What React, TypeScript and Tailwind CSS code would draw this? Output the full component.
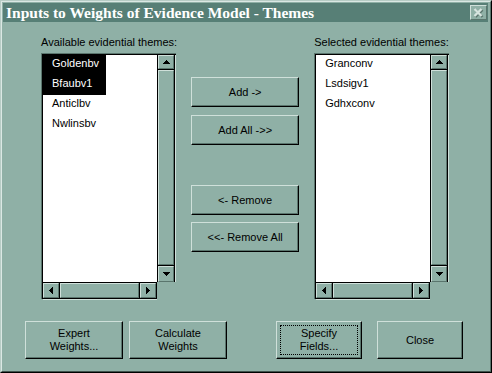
import React from "react";

const raised =
  "border border-t-[#cfe0da] border-l-[#cfe0da] border-r-[#5a756d] border-b-[#5a756d] bg-[#8fb0a6]";

function Arrow({ dir }: { dir: "up" | "down" | "left" | "right" }) {
  const vertical = dir === "up" || dir === "down";
  const w = vertical ? 7 : 4;
  const h = vertical ? 4 : 7;
  const pts = {
    up: "0,4 7,4 3.5,0",
    down: "0,0 7,0 3.5,4",
    left: "4,0 4,7 0,3.5",
    right: "0,0 0,7 4,3.5",
  }[dir];
  return (
    <svg width={w} height={h} viewBox={`0 0 ${w} ${h}`} shapeRendering="crispEdges">
      <polygon points={pts} fill="#000" />
    </svg>
  );
}

function ListBox({ items, selected = [] }: { items: string[]; selected?: number[] }) {
  return (
    <div className="w-[135px] border-t border-l border-[#5a756d]">
      <div className="grid grid-cols-[114px_18px] grid-rows-[227px_17px] border-t border-l border-black">
        {/* items */}
        <div className="bg-white">
          {items.map((it, i) => (
            <div key={it} className="h-[20px] flex">
              <div
                className={
                  selected.includes(i)
                    ? "w-[63px] h-full bg-black text-white pl-[9px] pb-[3px] flex items-center"
                    : "h-full pl-[9px] pb-[3px] flex items-center text-black"
                }
              >
                {it}
              </div>
            </div>
          ))}
        </div>
        {/* vertical scrollbar */}
        <div className="flex flex-col border-l border-r border-black shadow-[1px_0_0_#cfe0da]">
          <div className="h-[15px] border-b border-black">
            <div className={`${raised} h-full flex items-center justify-center`}>
              <Arrow dir="up" />
            </div>
          </div>
          <div className={`${raised} flex-1`} />
          <div className="h-[17px] border-t border-black">
            <div className={`${raised} h-full flex items-center justify-center`}>
              <Arrow dir="down" />
            </div>
          </div>
        </div>
        {/* horizontal scrollbar */}
        <div className="flex border-t border-b border-r border-black shadow-[0_1px_0_#cfe0da]">
          <div className="w-[17px] border-r border-black">
            <div className={`${raised} h-full flex items-center justify-center`}>
              <Arrow dir="left" />
            </div>
          </div>
          <div className={`${raised} flex-1`} />
          <div className="w-[17px] border-l border-black">
            <div className={`${raised} h-full flex items-center justify-center`}>
              <Arrow dir="right" />
            </div>
          </div>
        </div>
        <div />
      </div>
    </div>
  );
}

function Button({
  children,
  className = "",
  focused = false,
}: {
  children: React.ReactNode;
  className?: string;
  focused?: boolean;
}) {
  return (
    <div
      className={`border border-t-[#cfe0da] border-l-[#cfe0da] border-r-black border-b-black shadow-[inset_-1px_-1px_0_#5a756d] bg-[#8fb0a6] p-[3px] ${className}`}
    >
      <div
        className={`h-full flex items-center justify-center text-center leading-[13px] ${
          focused ? "border border-dotted border-black" : "border border-transparent"
        }`}
      >
        {children}
      </div>
    </div>
  );
}

export default function App() {
  return (
    <div className="w-[492px] h-[373px] bg-[#8fb0a6] font-['Liberation_Sans',Arial,sans-serif] text-[11px] text-black overflow-hidden">
      <div className="w-full h-full border border-t-[#b7ccc5] border-l-[#b7ccc5] border-r-black border-b-black">
        <div className="w-full h-full border border-t-[#dbe8e4] border-l-[#dbe8e4] border-r-[#5a756d] border-b-[#3f524c] pt-px pl-px pr-[2px] flex flex-col">
          {/* Title bar */}
          <div className="h-[19px] bg-[#577f76] flex items-center justify-between pl-[3px] pr-px">
            <span className="font-['Liberation_Serif',serif] font-bold text-[15.5px] text-white leading-none pt-px">
              Inputs to Weights of Evidence Model - Themes
            </span>
            <div className={`${raised} w-[17px] h-[15px] flex items-center justify-center`}>
              <svg width="11" height="10" viewBox="0 0 11 10">
                <path d="M2.5 2 L9.5 9 M9.5 2 L2.5 9" stroke="#5a756d" strokeWidth="2.4" />
                <path d="M1.5 1 L8.5 8 M8.5 1 L1.5 8" stroke="#d6e4df" strokeWidth="2.4" />
              </svg>
            </div>
          </div>

          {/* Main area */}
          <div className="flex pl-[38px] pt-[13px]">
            <div className="flex flex-col">
              <div className="h-[14px] leading-[14px] mb-[4px]">Available evidential themes:</div>
              <ListBox items={["Goldenbv", "Bfaubv1", "Anticlbv", "Nwlinsbv"]} selected={[0, 1]} />
            </div>

            <div className="ml-[14px] w-[108px] pt-[42px] flex flex-col">
              <Button className="h-[30px]">Add -&gt;</Button>
              <Button className="h-[30px] mt-[8px]">Add All -&gt;&gt;</Button>
              <Button className="h-[30px] mt-[40px]">&lt;- Remove</Button>
              <Button className="h-[30px] mt-[7px]">&lt;&lt;- Remove All</Button>
            </div>

            <div className="ml-[15px] flex flex-col">
              <div className="h-[14px] leading-[14px] mb-[4px]">Selected evidential themes:</div>
              <ListBox items={["Granconv", "Lsdsigv1", "Gdhxconv"]} />
            </div>
          </div>

          {/* Bottom buttons */}
          <div className="flex pl-[22px] mt-[22px]">
            <Button className="w-[98px] h-[38px]">
              Expert
              <br />
              Weights...
            </Button>
            <Button className="w-[98px] h-[38px] ml-[6px]">
              Calculate
              <br />
              Weights
            </Button>
            <Button className="w-[86px] h-[38px] ml-[49px]" focused>
              Specify
              <br />
              Fields...
            </Button>
            <Button className="w-[86px] h-[38px] ml-[15px]">Close</Button>
          </div>
        </div>
      </div>
    </div>
  );
}
